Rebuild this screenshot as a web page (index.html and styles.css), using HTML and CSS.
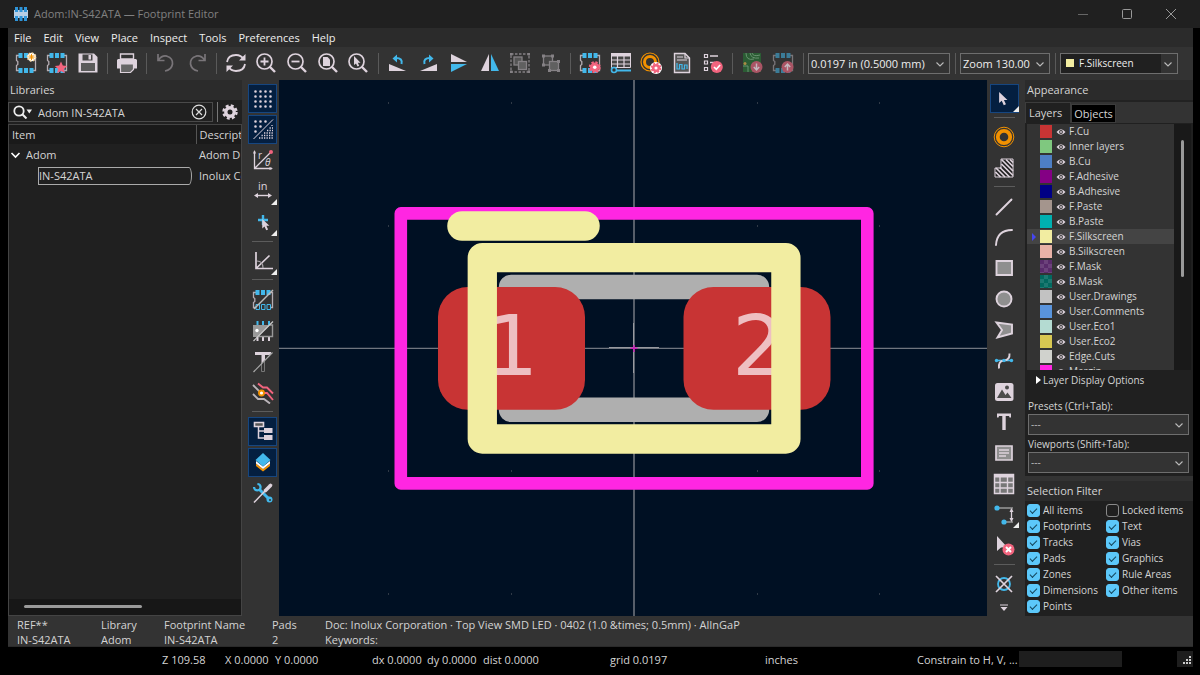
FILE: index.html
```html
<!DOCTYPE html>
<html lang="en">
<head>
<meta charset="utf-8">
<title>Adom:IN-S42ATA — Footprint Editor</title>
<link rel="stylesheet" href="styles.css">
</head>
<body>
<svg class="sprite" aria-hidden="true">
  <symbol id="fp" viewBox="0 0 22 22">
    <path d="M4 3.500H1.500V8.500L2.800 9.500V12.500L1.500 13.500V18.500H4M18 3.500H20.500V18.500H18" fill="none" stroke="#b5adb3" stroke-width="1.300"/>
    <path d="M3.500 1h4v5h-4zM9 1h4v5h-4zM14.500 1h4v5h-4zM3.500 16h4v5h-4zM9 16h4v5h-4zM14.500 16h4v5h-4z" fill="#42b8eb"/>
  </symbol>
  <symbol id="gearpink" viewBox="0 0 12 12">
    <circle cx="6" cy="6" r="4.500" fill="#f2647e"/>
    <circle cx="6" cy="6" r="4.800" fill="none" stroke="#f2647e" stroke-width="2" stroke-dasharray="2.200 1.570"/>
    <circle cx="6" cy="6" r="1.700" fill="#fff"/>
  </symbol>
  <symbol id="eye" viewBox="0 0 10 8">
    <path d="M.5 4Q5-1.500 9.500 4Q5 9.500.5 4z" fill="#ded3dd"/><circle cx="5" cy="4" r="1.900" fill="#333"/><circle cx="5" cy="4" r=".9" fill="#ded3dd"/>
  </symbol>
  <symbol id="chev" viewBox="0 0 10 10"><path d="M1.500 3.500L5 7L8.500 3.500" fill="none" stroke="#bbb" stroke-width="1.100"/></symbol>
  <symbol id="lens" viewBox="0 0 22 22"><circle cx="9.500" cy="9.500" r="7.500" fill="none" stroke="#ded3dd" stroke-width="1.700"/><path d="M14.500 14.500L20 20" stroke="#ded3dd" stroke-width="2.400"/></symbol>
  <symbol id="cursor" viewBox="0 0 12 16"><path d="M1 0V12.500L4 10L6.300 15L8.800 13.900L6.500 9H10.500z" fill="#ded3dd"/></symbol>
</svg>

<header class="titlebar">
  <svg class="logo" width="14" height="14" viewBox="0 0 14 14"><path d="M0 3h14v8H0z" fill="#b7cfe6"/><path d="M1 0h3v5H1zM5.500 0h3v5h-3zM10 0h3v5h-3zM1 9h3v5H1zM5.500 9h3v5h-3zM10 9h3v5h-3z" fill="#2f94d8"/></svg>
  <h1 class="title">Adom:IN-S42ATA — Footprint Editor</h1>
  <div class="winbtns">
    <button aria-label="Minimize"><svg width="12" height="12"><path d="M1 6.500h10" stroke="#666"/></svg></button>
    <button aria-label="Maximize"><svg width="12" height="12"><rect x="1.500" y="1.500" width="9" height="9" rx="1" fill="none" stroke="#999"/></svg></button>
    <button aria-label="Close"><svg width="12" height="12"><path d="M1 1L11 11M11 1L1 11" stroke="#999"/></svg></button>
  </div>
</header>

<div class="app">
<nav class="menubar">
  <button>File</button><button>Edit</button><button>View</button><button>Place</button><button>Inspect</button><button>Tools</button><button>Preferences</button><button>Help</button>
</nav>

<div class="toolbar">
  <div class="tools">
    <button aria-label="New footprint"><svg viewBox="0 0 22 22"><use href="#fp"/><circle cx="16.500" cy="5" r="4.200" fill="#fff"/><circle cx="16.500" cy="5" r="4" fill="none" stroke="#f8d9a0" stroke-width="1.600" stroke-dasharray="1.500 1.600"/><path d="M16.500 2v6M13.500 5h6M14.400 2.900l4.200 4.200M18.600 2.900l-4.200 4.200" stroke="#f29100"/></svg></button>
    <button aria-label="Footprint wizard"><svg viewBox="0 0 22 22"><use href="#fp"/><path d="M15 9.500L16.800 13.600L21.200 14L17.900 17L18.900 21.300L15 19L11.100 21.300L12.100 17L8.800 14L13.200 13.600z" fill="#f2647e"/></svg></button>
    <button aria-label="Save"><svg viewBox="0 0 22 22"><path d="M1.500 1.500H17L20.500 5V20.500H1.500z" fill="#ded3dd"/><path d="M5.500 2.500h10v6h-10z" fill="#444"/><path d="M11.500 3h2.500v4.500h-2.500z" fill="#ded3dd"/><path d="M4 11h14v8H4z" fill="#5a5a5a"/></svg></button>
    <i class="vsep"></i>
    <button aria-label="Print"><svg viewBox="0 0 22 22"><path d="M4.500 2h13v5h-13z" fill="#333" stroke="#ded3dd" stroke-width="1.400"/><path d="M2 7H20L21 8V16.500H1V8z" fill="#ded3dd"/><path d="M4.500 12h13v5.500l-3 3h-10z" fill="#666" stroke="#ded3dd" stroke-width="1.200"/></svg></button>
    <i class="vsep"></i>
    <button aria-label="Undo"><svg viewBox="0 0 22 22"><path d="M3 2V8.500H9.500M3.500 8Q7 3 12 4.200Q18 6 17.500 12Q16.500 18 10 19" fill="none" stroke="#797579" stroke-width="1.700"/></svg></button>
    <button aria-label="Redo"><svg viewBox="0 0 22 22"><path d="M19 2V8.500H12.500M18.500 8Q15 3 10 4.200Q4 6 4.500 12Q5.500 18 12 19" fill="none" stroke="#797579" stroke-width="1.700"/></svg></button>
    <i class="vsep"></i>
    <button aria-label="Refresh"><svg viewBox="0 0 22 22"><path d="M2 10Q3 3 11 3Q16 3 19 7.500M20 12Q19 19 11 19Q6 19 3 14.500" fill="none" stroke="#ded3dd" stroke-width="1.800"/><path d="M20.500 2V8.500H14zM1.500 20V13.500H8z" fill="#ded3dd"/></svg></button>
    <button aria-label="Zoom in"><svg viewBox="0 0 22 22"><use href="#lens"/><path d="M5.500 9.500h8M9.500 5.500v8" stroke="#ded3dd" stroke-width="1.800"/></svg></button>
    <button aria-label="Zoom out"><svg viewBox="0 0 22 22"><use href="#lens"/><path d="M5.500 9.500h8" stroke="#ded3dd" stroke-width="1.800"/></svg></button>
    <button aria-label="Zoom to fit"><svg viewBox="0 0 22 22"><use href="#lens"/><path d="M6 5h4.500l2.500 2.500V14H6z" fill="#ded3dd"/></svg></button>
    <button aria-label="Zoom to selection"><svg viewBox="0 0 22 22"><use href="#lens"/><path d="M7 4V13L9 11.500L10.500 14.500L12.200 13.700L10.800 10.700H13.500z" fill="#ded3dd"/></svg></button>
    <i class="vsep"></i>
    <button aria-label="Rotate counterclockwise"><svg viewBox="0 0 22 22"><path d="M2 12L19 19H2z" fill="#ded3dd"/><path d="M14.500 12Q16 6 9 6" fill="none" stroke="#42b8eb" stroke-width="2"/><path d="M5.500 6.500L10 2.500V10.500z" fill="#42b8eb"/></svg></button>
    <button aria-label="Rotate clockwise"><svg viewBox="0 0 22 22"><path d="M20 12L3 19H20z" fill="#ded3dd"/><path d="M7.500 12Q6 6 13 6" fill="none" stroke="#42b8eb" stroke-width="2"/><path d="M16.500 6.500L12 2.500V10.500z" fill="#42b8eb"/></svg></button>
    <button aria-label="Mirror vertically"><svg viewBox="0 0 22 22"><path d="M3 2L19 10H3z" fill="#ded3dd"/><path d="M3 20L19 12H3z" fill="#42b8eb"/></svg></button>
    <button aria-label="Mirror horizontally"><svg viewBox="0 0 22 22"><path d="M10 2V19H2z" fill="#ded3dd"/><path d="M12 2V19H20z" fill="#42b8eb"/></svg></button>
    <button aria-label="Group"><svg viewBox="0 0 22 22" fill="none" stroke="#858185" stroke-width="1.300"><rect x="2" y="2" width="18" height="18" stroke-dasharray="2.500 1.500"/><rect x="5" y="5" width="8" height="8" fill="#555"/><rect x="9.500" y="9.500" width="8" height="8" fill="#606060"/><path d="M1 1h2.500v2.500H1zM18.500 1H21v2.500h-2.500zM1 18.500h2.500V21H1zM18.500 18.500H21V21h-2.500z" fill="#858185" stroke="none"/></svg></button>
    <button aria-label="Ungroup"><svg viewBox="0 0 22 22" fill="none" stroke="#858185" stroke-width="1.300"><rect x="3.500" y="4" width="9" height="9" fill="#444"/><rect x="9.500" y="9.500" width="9" height="9" fill="#606060"/><path d="M2 2.500h3v3H2zM11 2.500h3v3h-3zM2 11.500h3v3H2zM17 8h3v3h-3zM8 17h3v3H8zM17 17h3v3h-3z" fill="#858185" stroke="none"/></svg></button>
    <i class="vsep"></i>
    <button aria-label="Footprint properties"><svg viewBox="0 0 22 22"><use href="#fp"/><use href="#gearpink" x="9.500" y="9" width="12.500" height="12.500"/></svg></button>
    <button aria-label="Pad table"><svg viewBox="0 0 22 22"><path d="M1.500 1.500h19v14h-19z" fill="#444" stroke="#ded3dd"/><path d="M1 1h20v3.500H1z" fill="#ded3dd"/><path d="M1 8h20M1 12h20M7.500 3v13M14 3v13" stroke="#ded3dd" stroke-width="1.200"/><path d="M5 18.500h16" stroke="#42b8eb" stroke-width="2"/><circle cx="4" cy="18" r="2.500" fill="#333" stroke="#42b8eb" stroke-width="1.600"/></svg></button>
    <button aria-label="Default pad properties"><svg viewBox="0 0 22 22" fill="none"><circle cx="10" cy="10" r="9" stroke="#f29100" stroke-width="1.200"/><circle cx="10" cy="10" r="5.500" stroke="#f29100" stroke-width="3"/><circle cx="16" cy="16" r="6" fill="#fff"/><use href="#gearpink" x="10.500" y="10.500" width="11" height="11"/></svg></button>
    <button aria-label="Datasheet"><svg viewBox="0 0 22 22"><path d="M3.500 1.500H14L18.500 6V20.500H3.500z" fill="#555" stroke="#ded3dd" stroke-width="1.400"/><path d="M14 1.500V6h4.500M6 5h6M6 8h10" fill="none" stroke="#ded3dd" stroke-width="1.200"/><path d="M6 11V17h2.500v-4.500H11V17h2.500v-4H16V17" fill="none" stroke="#42b8eb" stroke-width="1.200"/></svg></button>
    <button aria-label="Footprint checker"><svg viewBox="0 0 22 22"><path d="M2.500 2.500h3v3h-3zM2.500 9h3v3h-3zM2.500 15.500h3v3h-3z" fill="none" stroke="#ded3dd" stroke-width="1.200"/><path d="M8 4h8M8 10.500h5" stroke="#ded3dd" stroke-width="1.300"/><circle cx="14.800" cy="15" r="6" fill="#f2647e"/><path d="M12 15l2.300 2.300 3.800-4.300" fill="none" stroke="#fff" stroke-width="1.700"/></svg></button>
    <i class="vsep"></i>
    <button aria-label="Load footprint from board"><svg viewBox="0 0 22 22"><path d="M2 1H20V20H2z" fill="#2b5c34"/><path d="M5 1q0 8 8 6M11 1q1 4 8 2M2 14h5v6M9 1q1 6 9 5" fill="none" stroke="#699170"/><circle cx="4" cy="11.500" r="1.500" fill="#aa8b45"/><circle cx="15.500" cy="15" r="6" fill="#aa5565"/><path d="M15.500 11.500v6M12.800 15l2.700 3 2.700-3" fill="none" stroke="#c5b8bf" stroke-width="1.500"/></svg></button>
    <button aria-label="Insert footprint into board"><svg viewBox="0 0 22 22"><use href="#fp" opacity=".55"/><circle cx="15.500" cy="15" r="6" fill="#aa5565"/><path d="M15.500 18.500v-6M12.800 15l2.700-3 2.700 3" fill="none" stroke="#c5b8bf" stroke-width="1.500"/></svg></button>
  </div>
  <i class="vbar"></i>
  <div class="combo grid-combo"><select aria-label="Grid"><option>0.0197 in (0.5000 mm)</option></select><svg class="arrow"><use href="#chev"/></svg></div>
  <i class="vbar"></i>
  <div class="combo zoom-combo"><select aria-label="Zoom"><option>Zoom 130.00</option></select><svg class="arrow"><use href="#chev"/></svg></div>
  <i class="vbar"></i>
  <div class="combo layer-combo"><i class="chip"></i><select aria-label="Layer"><option>F.Silkscreen</option></select><svg class="arrow"><use href="#chev"/></svg></div>
</div>

<main class="main">
  <section class="libs">
    <h2 class="head">Libraries</h2>
    <div class="searchrow">
      <div class="search">
        <svg width="20" height="14" viewBox="0 0 20 14"><circle cx="6" cy="6" r="4.700" fill="none" stroke="#eee" stroke-width="1.800"/><path d="M9.300 9.300L13.500 13.500" stroke="#eee" stroke-width="2"/><path d="M13.500 4.500h5.500l-2.700 4z" fill="#eee"/></svg>
        <input type="text" aria-label="Search libraries" value="Adom IN-S42ATA">
        <button aria-label="Clear search"><svg width="16" height="16" fill="none" stroke="#ddd" stroke-width="1.200"><circle cx="8" cy="8" r="6.800"/><path d="M5 5l6 6M11 5l-6 6"/></svg></button>
      </div>
      <i class="bar"></i>
      <button aria-label="Library options"><svg width="16" height="16" viewBox="0 0 16 16" fill="none" stroke="#ded3dd"><circle cx="8" cy="8" r="4.200" stroke-width="3.400"/><circle cx="8" cy="8" r="6.500" stroke-width="2.400" stroke-dasharray="2.900 2.205"/></svg></button>
    </div>
    <div class="treebox">
      <table class="tree">
        <thead><tr><th class="c1">Item</th><th>Descripti</th></tr></thead>
        <tbody>
          <tr><td><span class="node"><svg width="11" height="10"><path d="M1.500 3L5.500 7L9.500 3" fill="none" stroke="#fff" stroke-width="1.600"/></svg>Adom</span></td><td>Adom D</td></tr>
          <tr><td><span class="leaf">IN-S42ATA</span></td><td>Inolux Co</td></tr>
        </tbody>
      </table>
      <div class="hscroll"><i></i></div>
    </div>
  </section>

  <div class="side left">
    <button class="on" aria-label="Show grid"><svg viewBox="0 0 22 22"><path d="M3.500 3.500H20M3.500 8.500H20M3.500 13.500H20M3.500 18.500H20" stroke="#ded3dd" stroke-width="2.600" stroke-linecap="round" stroke-dasharray="0 5"/></svg></button>
    <button class="on" aria-label="Grid overrides"><svg viewBox="0 0 22 22"><path d="M3.500 3.500H15M3.500 8.500H10M3.500 13.500H5" stroke="#ded3dd" stroke-width="2.600" stroke-linecap="round" stroke-dasharray="0 5"/><path d="M1.500 21L21 1.500" stroke="#ded3dd"/><path d="M20 7v1M17.500 10H21M15 12.500H21M12 15H21M9.500 17.500H21M7 20H21" stroke="#ded3dd" stroke-width="1.300" stroke-dasharray="1.300 1.200"/></svg></button>
    <button aria-label="Polar coordinates"><svg viewBox="0 0 22 22"><path d="M2.500 2V19.500H20M2.500 19.500L18 4" fill="none" stroke="#ded3dd" stroke-width="1.300"/><path d="M1 4.500L2.500 1L4 4.500zM17.500 18L21 19.500L17.500 21z" fill="#ded3dd"/><circle cx="19" cy="3" r="2" fill="#f2647e"/><text class="ic-text" x="6" y="10" font-size="10">r</text><text class="ic-text slant" x="13" y="17" font-size="10">θ</text></svg></button>
    <button class="more" aria-label="Units"><svg viewBox="0 0 22 22"><text class="ic-text" x="6" y="10" font-size="11">in</text><path d="M4 15.500h14" stroke="#ded3dd" stroke-width="1.400"/><path d="M2 15.500L6 13V18zM20 15.500L16 13V18z" fill="#ded3dd"/></svg></button>
    <button class="more" aria-label="Crosshair"><svg viewBox="0 0 22 22"><path d="M11 4v10M6 9h10" stroke="#42b8eb" stroke-width="2.400"/><use href="#cursor" x="9.500" y="8" width="9" height="12"/></svg></button>
    <i class="hsep"></i>
    <button class="more" aria-label="Line angle mode"><svg viewBox="0 0 22 22"><path d="M4 2V18.500H21M4 18.500L17.500 5.500" fill="none" stroke="#ded3dd" stroke-width="1.700"/><path d="M5 11Q11 11 11 18" fill="none" stroke="#a9a3a8" stroke-width="1.200"/></svg></button>
    <i class="hsep"></i>
    <button aria-label="Sketch pads"><svg viewBox="0 0 22 22"><path d="M4 3.500H1.500V8.500L2.800 9.500V12.500L1.500 13.500V18.500H4M18 3.500H20.500V18.500H18" fill="none" stroke="#b5adb3" stroke-width="1.300"/><path d="M3.500 1h4v5h-4zM9 1h4v5h-4zM14.500 1h4v5h-4z" fill="#42b8eb"/><path d="M4 15.500h3.500v5H4zM9.500 15.500H13v5H9.500zM15 15.500h3.500v5H15z" fill="none" stroke="#42b8eb"/><path d="M2 20L21 1" stroke="#bbb" stroke-width="1.400"/></svg></button>
    <button aria-label="Sketch graphics"><svg viewBox="0 0 22 22"><path d="M5.500 1v4M11 1v4M17 1v4" stroke="#42b8eb" stroke-width="2"/><path d="M5.500 17v4M11 17v4M17 17v4" stroke="#ded3dd" stroke-width="2"/><path d="M1 5H18L6 17H1z" fill="#999"/><path d="M18 5h2.500v11.500H7" fill="none" stroke="#999" stroke-width="1.400"/><circle cx="5" cy="10.500" r="1.700" fill="#fff"/><path d="M1.500 21L21 1.500" stroke="#ccc" stroke-width="1.200"/></svg></button>
    <button aria-label="Sketch text"><svg viewBox="0 0 22 22"><path d="M3 1H19V2.500L17.500 4H13V9L9.500 12.500V4H3z" fill="#ded3dd"/><path d="M9.500 12V20.500H12.500V9" fill="none" stroke="#777"/><path d="M1.500 21L20.500 1.500" stroke="#aaa" stroke-width="1.200"/></svg></button>
    <button aria-label="High contrast"><svg viewBox="0 0 22 22" fill="none" stroke-width="1.900"><path d="M1 3L9 11M1 12L6 17H12L18 21.500" stroke="#bbb5ba"/><path d="M6 1.500L11 5.500H15L21 11.500M10 11H15L21 18" stroke="#f2647e"/><circle cx="9.500" cy="11" r="2.500" fill="#fff" stroke="#f29100"/></svg></button>
    <i class="hsep"></i>
    <button class="on" aria-label="Library tree"><svg viewBox="0 0 22 22"><path d="M2.500 2.500h9v4h-9z" fill="#555" stroke="#ded3dd" stroke-width="1.600"/><path d="M6.500 7V18H12M6.500 11H12" fill="none" stroke="#ded3dd" stroke-width="1.500"/><path d="M12 8h8.500v5H12zM12 15h8.500v5H12z" fill="#ded3dd"/></svg></button>
    <button class="on" aria-label="Layers manager"><svg viewBox="0 0 22 22"><path d="M4 12.500L11 18L18 12.500V15L11 20.500L4 15z" fill="#f29100"/><path d="M4 10L11 15.500L18 10V12.500L11 18L4 12.500z" fill="#fff"/><path d="M11 2L18.500 9L11 15.500L3.500 9z" fill="#42b8eb"/></svg></button>
    <button aria-label="Properties"><svg viewBox="0 0 22 22"><path d="M7 7L17 17" stroke="#42b8eb" stroke-width="3"/><path d="M2 5A3.400 3.400 0 0 0 5.400 8.400A3.400 3.400 0 0 0 8.600 5A3.400 3.400 0 0 0 5.400 2" fill="none" stroke="#42b8eb" stroke-width="2.200"/><circle cx="17.500" cy="17.500" r="3" fill="#42b8eb"/><circle cx="18" cy="18" r="1" fill="#333"/><path d="M2 20.500L13 9" stroke="#ded3dd" stroke-width="1.500"/><path d="M13.500 8.500L18.500 3.500" stroke="#ded3dd" stroke-width="3.600" stroke-linecap="round"/></svg></button>
  </div>

  <svg class="canvas" viewBox="279 80 708 536" preserveAspectRatio="xMidYMid slice" role="img" aria-label="Footprint IN-S42ATA">
    <path d="M388 103h1M511 103h1M757 103h1M879 103h1M388 226h1M757 226h1M879 226h1M388 471h1M511 471h1M757 471h1M879 471h1M388 594h1M511 594h1M757 594h1M879 594h1" stroke="#2f3946" stroke-width="2"/>
    <path d="M634 80V616" stroke="#7c8189" stroke-width="1.400"/>
    <path d="M279 348.300H987" stroke="#8d9096" stroke-width="1"/>
    <path d="M609 347.500H659M633.500 323V373" stroke="#989aa0" stroke-width="1"/>
    <path d="M630.500 348.300H637.500M634 345V352" stroke="#c71cb4" stroke-width="1.500"/>
    <rect x="400.800" y="213.400" width="466.500" height="270" fill="none" stroke="#ff26e2" stroke-width="12.600" stroke-linejoin="round"/>
    <rect x="511" y="287" width="246" height="122.800" fill="none" stroke="#afafaf" stroke-width="24.400" stroke-linejoin="round"/>
    <rect x="438" y="287" width="147" height="122.700" rx="30" fill="#c83434"/>
    <rect x="683.500" y="287" width="147" height="122.700" rx="30" fill="#c83434"/>
    <text class="padnum" x="485" y="375">1</text>
    <text class="padnum" x="732" y="375">2</text>
    <rect x="482.300" y="257.700" width="303.600" height="181.300" fill="none" stroke="#f2eda1" stroke-width="29.300" stroke-linejoin="round"/>
    <path d="M462 226H585" stroke="#f2eda1" stroke-width="29.500" stroke-linecap="round"/>
  </svg>

  <div class="side right">
    <button class="on more" aria-label="Select"><svg viewBox="0 0 22 22"><use href="#cursor" x="5" y="4" width="11" height="14"/></svg></button>
    <i class="hsep"></i>
    <button aria-label="Add pad"><svg viewBox="0 0 22 22" fill="none" stroke="#f29100"><circle cx="11" cy="11" r="9.800" stroke-width="1"/><circle cx="11" cy="11" r="6.200" stroke-width="3.800"/></svg></button>
    <button aria-label="Rule area"><svg viewBox="0 0 22 22"><path d="M8 2H20V20H2V11H8z" fill="#222" stroke="#ded3dd" stroke-width="1"/><path d="M8.500 2.500L20 14M13 2.500L20 9.500M17 2.500L20 5.500M8.500 7L20 18.500M7 10.500L16.500 20M3 11L12 20M2.500 15L7.500 20" stroke="#ded3dd" stroke-width="1.700"/></svg></button>
    <i class="hsep"></i>
    <button aria-label="Draw line"><svg viewBox="0 0 22 22"><path d="M3.500 18.500L18.500 3.500" stroke="#ded3dd" stroke-width="1.900" stroke-linecap="round"/></svg></button>
    <button aria-label="Draw arc"><svg viewBox="0 0 22 22"><path d="M3 19Q4 4 19 4" fill="none" stroke="#ded3dd" stroke-width="1.900" stroke-linecap="round"/></svg></button>
    <button aria-label="Draw rectangle"><svg viewBox="0 0 22 22"><path d="M3.500 4h15.500v14H3.500z" fill="#8f8f8f" stroke="#ded3dd" stroke-width="1.900"/></svg></button>
    <button aria-label="Draw circle"><svg viewBox="0 0 22 22"><circle cx="11" cy="11" r="7.500" fill="#8f8f8f" stroke="#ded3dd" stroke-width="1.900"/></svg></button>
    <button aria-label="Draw polygon"><svg viewBox="0 0 22 22"><path d="M3.500 3.500L19 5.500V14.500L4.500 18.500L9 11z" fill="#8f8f8f" stroke="#ded3dd" stroke-width="1.900"/></svg></button>
    <button aria-label="Draw bezier"><svg viewBox="0 0 22 22"><path d="M3 10.500H19" stroke="#42b8eb" stroke-width="1.600"/><path d="M6 18.500Q5 11 11 10.500Q17 10 16.500 3.500" fill="none" stroke="#ded3dd" stroke-width="1.900"/><circle cx="3.500" cy="10.500" r="1.700" fill="#42b8eb"/><circle cx="11" cy="10.500" r="1.700" fill="#42b8eb"/><circle cx="18.500" cy="10.500" r="1.700" fill="#42b8eb"/></svg></button>
    <button aria-label="Place image"><svg viewBox="0 0 22 22"><rect x="2" y="2" width="18.500" height="18" rx="2.500" fill="#ded3dd"/><path d="M4 17L9 8.500L12.500 14L14.500 11.500L18.500 17z" fill="#4b4b4b"/><circle cx="14" cy="6.500" r="2" fill="#4b4b4b"/></svg></button>
    <button aria-label="Place text"><svg viewBox="0 0 22 22"><path d="M4 2.500H18V6.500H16.500L16 5H12.700V19H9.300V5H6L5.500 6.500H4z" fill="#ded3dd"/></svg></button>
    <button aria-label="Text box"><svg viewBox="0 0 22 22"><path d="M3 4h16v14H3z" fill="#8f8f8f" stroke="#ded3dd" stroke-width="1.700"/><path d="M6 8h10M6 11h10M6 14h7" stroke="#ded3dd" stroke-width="1.300"/></svg></button>
    <button aria-label="Table"><svg viewBox="0 0 22 22"><path d="M1.500 1.500h19v19h-19z" fill="#777" stroke="#ded3dd" stroke-width="1.500"/><path d="M1 1h20v3.500H1z" fill="#ded3dd"/><path d="M1 9.500h20M1 15h20M7 3v18M14.500 3v18" stroke="#ded3dd" stroke-width="1.400"/></svg></button>
    <button class="more" aria-label="Dimension"><svg viewBox="0 0 22 22"><path d="M4 4H20M11 18H20" stroke="#999" stroke-width="1.300"/><path d="M18.500 5V17" stroke="#ded3dd" stroke-width="1.300"/><path d="M18.500 4L20.500 8H16.500zM18.500 18L20.500 14H16.500z" fill="#ded3dd"/><circle cx="4" cy="4" r="2.600" fill="#42b8eb"/><circle cx="11" cy="18" r="2.600" fill="#42b8eb"/></svg></button>
    <button aria-label="Delete"><svg viewBox="0 0 22 22"><path d="M4 1V16L8 12.500L14 12z" fill="#ded3dd"/><circle cx="15.500" cy="14.500" r="6" fill="#f2647e"/><path d="M13 12l5 5M18 12l-5 5" stroke="#fff" stroke-width="2"/></svg></button>
    <i class="hsep"></i>
    <button aria-label="Set anchor"><svg viewBox="0 0 22 22"><circle cx="11" cy="11" r="6" fill="none" stroke="#42b8eb" stroke-width="1.800"/><path d="M3 3L19 19M19 3L3 19" stroke="#ded3dd" stroke-width="1.700"/></svg></button>
    <button class="overflow" aria-label="More tools"><svg width="8" height="8"><path d="M0 1h8" stroke="#ded3dd"/><path d="M.5 3h7L4 7z" fill="#ded3dd"/></svg></button>
  </div>

  <aside class="panel">
    <h2 class="head">Appearance</h2>
    <div class="tabs"><button class="tab cur">Layers</button><button class="tab">Objects</button></div>
    <div class="book">
      <div class="layerbox">
        <ul class="layers">
          <li><i class="sw" style="background:#c83434"></i><svg><use href="#eye"/></svg>F.Cu</li>
          <li><i class="sw" style="background:#7fc87f"></i><svg><use href="#eye"/></svg>Inner layers</li>
          <li><i class="sw" style="background:#4d7fc4"></i><svg><use href="#eye"/></svg>B.Cu</li>
          <li><i class="sw" style="background:#840084"></i><svg><use href="#eye"/></svg>F.Adhesive</li>
          <li><i class="sw" style="background:#000084"></i><svg><use href="#eye"/></svg>B.Adhesive</li>
          <li><i class="sw" style="background:#a4958d"></i><svg><use href="#eye"/></svg>F.Paste</li>
          <li><i class="sw" style="background:#00b0b0"></i><svg><use href="#eye"/></svg>B.Paste</li>
          <li class="active"><i class="sw" style="background:#f2eda1"></i><svg><use href="#eye"/></svg>F.Silkscreen</li>
          <li><i class="sw" style="background:#e8b2a7"></i><svg><use href="#eye"/></svg>B.Silkscreen</li>
          <li><i class="sw check" style="background-color:#5a2b6b"></i><svg><use href="#eye"/></svg>F.Mask</li>
          <li><i class="sw check" style="background-color:#02695f"></i><svg><use href="#eye"/></svg>B.Mask</li>
          <li><i class="sw" style="background:#c2c2c2"></i><svg><use href="#eye"/></svg>User.Drawings</li>
          <li><i class="sw" style="background:#5994dc"></i><svg><use href="#eye"/></svg>User.Comments</li>
          <li><i class="sw" style="background:#b4dbd2"></i><svg><use href="#eye"/></svg>User.Eco1</li>
          <li><i class="sw" style="background:#d8c852"></i><svg><use href="#eye"/></svg>User.Eco2</li>
          <li><i class="sw" style="background:#d0d2cd"></i><svg><use href="#eye"/></svg>Edge.Cuts</li>
          <li><i class="sw" style="background:#ff26e2"></i><svg><use href="#eye"/></svg>Margin</li>
        </ul>
        <div class="vscroll"><i></i></div>
      </div>
      <button class="ldo"><svg width="5" height="8"><path d="M0 0L5 4L0 8z" fill="#fff"/></svg>Layer Display Options</button>
      <label class="lab" for="presets">Presets (Ctrl+Tab):</label>
      <div class="combo wide"><select id="presets"><option>---</option></select><svg class="arrow"><use href="#chev"/></svg></div>
      <label class="lab" for="viewports">Viewports (Shift+Tab):</label>
      <div class="combo wide"><select id="viewports"><option>---</option></select><svg class="arrow"><use href="#chev"/></svg></div>
    </div>
    <h2 class="head">Selection Filter</h2>
    <div class="filter">
      <label><input type="checkbox" checked>All items</label><label><input type="checkbox">Locked items</label>
      <label><input type="checkbox" checked>Footprints</label><label><input type="checkbox" checked>Text</label>
      <label><input type="checkbox" checked>Tracks</label><label><input type="checkbox" checked>Vias</label>
      <label><input type="checkbox" checked>Pads</label><label><input type="checkbox" checked>Graphics</label>
      <label><input type="checkbox" checked>Zones</label><label><input type="checkbox" checked>Rule Areas</label>
      <label><input type="checkbox" checked>Dimensions</label><label><input type="checkbox" checked>Other items</label>
      <label><input type="checkbox" checked>Points</label>
    </div>
  </aside>
</main>

<div class="info">
  <div>REF**<br>IN-S42ATA</div><div>Library<br>Adom</div><div>Footprint Name<br>IN-S42ATA</div><div>Pads<br>2</div><div>Doc: Inolux Corporation · Top View SMD LED · 0402 (1.0 &amp;times; 0.5mm) · AlInGaP<br>Keywords:</div>
</div>
</div>

<footer class="status">
  <span>Z 109.58</span><span>X 0.0000</span><span>Y 0.0000</span><span>dx 0.0000</span><span>dy 0.0000</span><span>dist 0.0000</span><span>grid 0.0197</span><span>inches</span><span>Constrain to H, V, ...</span><i class="field"></i>
  <svg class="grip" width="16" height="16"><path d="M12 5h2v2h-2zM9 8h2v2H9zM12 8h2v2h-2zM6 11h2v2H6zM9 11h2v2H9zM12 11h2v2h-2z" fill="#ccc"/></svg>
</footer>
</body>
</html>
```
FILE: styles.css
```css
* { box-sizing: border-box; }
body {
  margin: 0;
  min-height: 100vh;
  display: flex;
  flex-direction: column;
  background: #000;
  color: #d4d4d4;
  font: 11px/15px "Open Sans", "Noto Sans", sans-serif;
}
button, input, select { font: inherit; color: inherit; margin: 0; padding: 0; border: 0; background: none; border-radius: 0; }
button { display: flex; align-items: center; justify-content: center; }
h1, h2, ul { margin: 0; padding: 0; font: inherit; }
svg { display: block; flex: none; }
.sprite { position: absolute; width: 0; height: 0; }

.titlebar { display: flex; align-items: center; height: 28px; padding: 0 23px 1px 14px; background: #202020; }
.title { margin-left: 6px; color: #808080; flex: 1; }
.winbtns { display: flex; gap: 32px; }

.app { flex: 1; display: flex; flex-direction: column; margin: 0 7px 0 8px; background: #333; }
.menubar { display: flex; gap: 12px; height: 19px; padding-left: 6px; background: #2b2b2b; color: #eee; }

.toolbar { display: flex; align-items: center; height: 33px; padding: 0 15px 1px 3px; }
.tools { flex: 1; display: flex; align-items: center; }
.tools button { flex: 18 1 0; min-width: 0; }
.tools svg { width: 22px; height: 22px; }
.vsep { flex: 5 1 0; display: flex; justify-content: center; }
.vsep::before { content: ""; width: 1px; height: 21px; background: #5a5a5a; }
.vbar { width: 1px; height: 21px; margin: 0 4px 0 5px; background: #5a5a5a; }

.combo { position: relative; height: 21px; border: 1px solid #6e6e6e; background: #333; color: #eee; }
.combo select { display: block; appearance: none; width: 100%; height: 100%; padding-left: 2px; outline: 0; }
.arrow { position: absolute; right: 4px; top: 5px; width: 10px; height: 10px; pointer-events: none; }
.grid-combo { width: 142px; }
.zoom-combo { width: 90px; }
.layer-combo { width: 118px; background: linear-gradient(90deg, #202020 100px, #333 100px); font-size: 10px; }
.layer-combo select { padding-left: 18px; }
.chip { position: absolute; left: 5px; top: 5px; width: 8px; height: 8px; background: #f2eda1; }

.main { flex: 1; display: flex; min-height: 0; }
.head { height: 20px; padding-left: 2px; line-height: 20px; background: #2b2b2b; }

.libs { width: 234px; display: flex; flex-direction: column; background: #202020; }
.searchrow { display: flex; align-items: center; gap: 4px; height: 24px; }
.search { display: flex; align-items: center; width: 205px; height: 20px; padding: 0 5px 0 4px; border: 1px solid #4a4a4a; }
.search input { flex: 1; min-width: 0; margin-left: 5px; outline: 0; }
.searchrow .bar { width: 1px; height: 20px; background: #777; }
.treebox { flex: 1; display: flex; flex-direction: column; border: 1px solid #444; }
.tree { width: 100%; table-layout: fixed; border-collapse: collapse; margin-bottom: auto; }
.tree th { height: 19px; padding: 0 0 0 3px; background: #1a1a1a; font-weight: normal; text-align: left; overflow: hidden; white-space: nowrap; }
.tree .c1 { width: 187px; border-right: 1px solid #555; }
.tree td { height: 21px; padding: 0 0 0 3px; overflow: hidden; white-space: nowrap; }
.node { display: flex; align-items: center; gap: 5px; margin-left: -2px; }
.leaf { display: block; width: 154px; height: 18px; margin-left: 26px; border: 1px solid #aaa; border-radius: 0 3px 3px 0 / 0 9px 9px 0; line-height: 16px; }
.hscroll { height: 16px; padding: 6px 15px; background: #171717; }
.hscroll i { display: block; width: 118px; height: 3px; border-radius: 2px; background: #9a9a9a; }

.side { display: flex; flex-direction: column; align-items: center; justify-content: space-between; padding: 4px 0; background: #333; }
.side.left { width: 37px; padding: 4px 0 108px 4px; }
.side.left, .side.right { flex: none; }
.side.right { width: 38px; padding: 4px 4px 1px 0; }
.side button { position: relative; width: 29px; height: 29px; border: 1px solid transparent; }
.side button.on { background: #041f40; border-color: #164680; }
.side button svg { width: 22px; height: 22px; }
.side button.more::after { content: ""; position: absolute; right: -1px; bottom: 0; border: 3px solid transparent; border-right-color: #eee; border-bottom-color: #eee; }
.side .hsep { height: 6px; width: 21px; border: solid #333; border-width: 2px 0 3px; background: #5c5c5c; }
.side button.overflow { height: 14px; }
.side button.overflow svg { width: 8px; height: 8px; }
.ic-text { fill: #ded3dd; font-family: "Open Sans", sans-serif; }
.slant { font-style: italic; }

.canvas { flex: 1; min-width: 0; width: 0; height: auto; background: #001023; }
.padnum { font: 84px "DejaVu Sans", sans-serif; fill: #eebfc2; }

.panel { width: 168px; display: flex; flex-direction: column; }
.tabs { display: flex; align-items: flex-end; height: 23px; border-top: 2px solid #222; }
.tab { width: 45px; height: 19px; border: 1px solid #3c3c3c; background: #000; }
.tab.cur { width: 46px; height: 21px; justify-content: flex-start; padding: 0 0 1px 3px; border-bottom: 0; background: #202020; }
.book { display: flex; flex-direction: column; margin-bottom: 5px; padding: 1px 4px 3px 2px; background: #202020; font-size: 10px; }
.layerbox { display: flex; height: 246px; margin-right: -2px; overflow: hidden; }
.layers { flex: 1; list-style: none; background: #333; overflow: hidden; }
.layers li { position: relative; display: flex; align-items: center; height: 15px; padding-left: 13px; }
.layers li svg { width: 10px; height: 8px; margin: 0 3px 0 4px; }
.layers li.active { background: #444; }
.layers li.active::before { content: ""; position: absolute; left: 5px; top: 4px; border: 4px solid transparent; border-left-color: #4646f0; border-right: 0; }
.sw { width: 12px; height: 13px; }
.sw.check { background-image: conic-gradient(#ffffff1c 25%, transparent 0 50%, #ffffff1c 0 75%, transparent 0); background-size: 8px 8px; }
.vscroll { width: 17px; padding: 16px 7px; background: #191919; }
.vscroll i { display: block; width: 3px; height: 137px; border-radius: 2px; background: #9a9a9a; }
.ldo { justify-content: flex-start; gap: 2px; height: 20px; padding-left: 9px; }
.lab { height: 15px; margin: 9px 0 0 1px; }
.lab ~ .lab { margin-top: 2px; }
.combo.wide { margin-left: 1px; }
.combo.wide select { color: #bbb; }
.filter { flex: 1; display: grid; grid-template-columns: 79px 1fr; align-content: start; row-gap: 1px; padding: 2px 0 0 2px; background: #202020; font-size: 10px; }
.filter label { display: flex; align-items: center; gap: 3px; height: 15px; white-space: nowrap; }
.filter input { appearance: none; width: 13px; height: 13px; border: 1px solid #8a8a8a; border-radius: 3px; display: grid; place-items: center; }
.filter input:checked { background: #5cc8fa; border-color: #5cc8fa; }
.filter input:checked::after { content: ""; width: 6px; height: 3px; margin-bottom: 2px; border: solid #14465c; border-width: 0 0 1px 1px; transform: rotate(-45deg); }

.info { display: grid; grid-template-columns: 84px 63px 108px 53px 1fr; height: 31px; padding: 1px 0 0 9px; border-bottom: 1px solid #2a2a2a; white-space: nowrap; }
.status { display: grid; grid-template-columns: 63px 50px 97px 55px 56px 127px 155px 152px 102px 103px 1fr; align-items: center; height: 28px; padding: 0 7px 4px 162px; white-space: nowrap; }
.field { height: 16px; background: #1e1e1e; }
.grip { justify-self: end; background: #1e1e1e; }
```
